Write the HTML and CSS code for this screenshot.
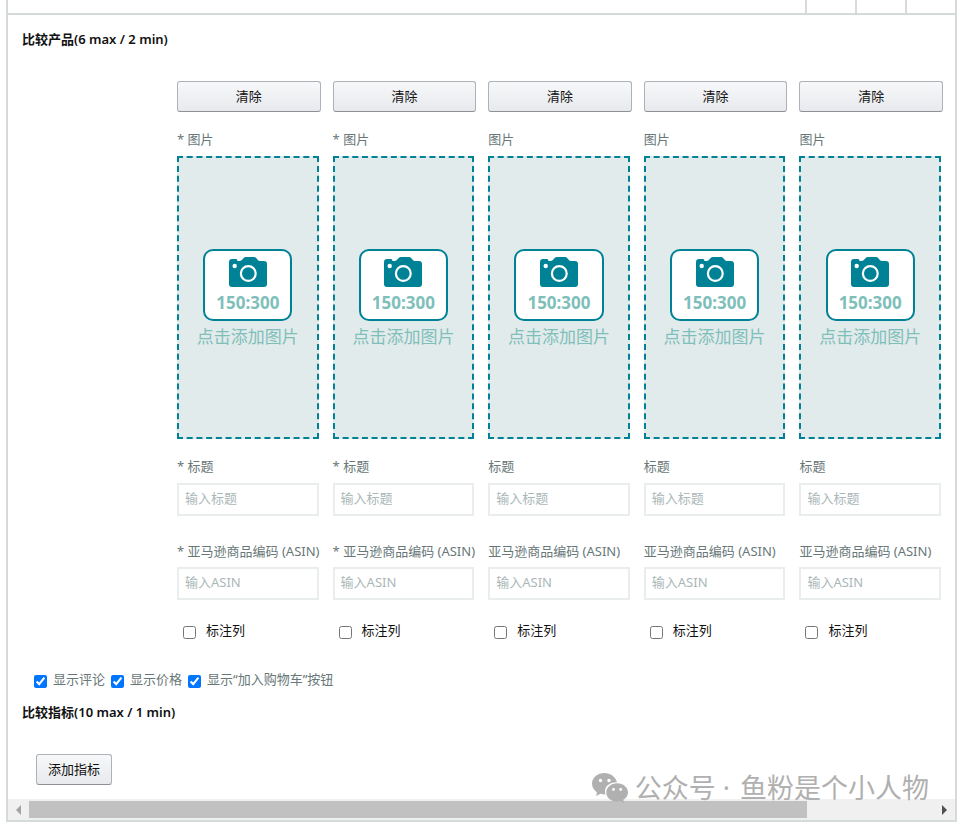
FILE: index.html
```html
<!DOCTYPE html>
<html lang="zh-CN">
<head>
<meta charset="utf-8">
<meta name="viewport" content="width=device-width, initial-scale=1">
<title>比较产品</title>
<link rel="stylesheet" href="styles.css">
</head>
<body>
<svg class="defs" aria-hidden="true">
  <symbol id="camera" viewBox="0 0 38 30">
    <path fill="#008296" d="M4 2h3q1.500 0 1.500 2h2q2 0 3-1.800Q15 0 17 0h8q2 0 3 2 1 2 3 2h4q3 0 3 3v20q0 3-3 3H3q-3 0-3-3V5q0-3 3-3z"/>
    <circle cx="5.700" cy="9" r="2.200" fill="#fff"/>
    <circle cx="19.300" cy="16.500" r="7.400" fill="none" stroke="#fff" stroke-width="2.200"/>
  </symbol>
</svg>
<main class="panel">
  <div class="panel-bar"><span></span><span></span><span></span></div>
  <div class="module">
    <h2 class="heading">比较产品(6 max / 2 min)</h2>
    <div class="products">
      <section class="product">
        <button class="btn" type="button">清除</button>
        <p class="label">* 图片</p>
        <button class="drop" type="button"><span class="card"><svg class="camera"><use href="#camera"/></svg><span class="size">150:300</span></span><span class="hint">点击添加图片</span></button>
        <label class="label" for="title1">* 标题</label>
        <input class="field" id="title1" type="text" placeholder="输入标题">
        <label class="label label-asin" for="asin1">* 亚马逊商品编码 (ASIN)</label>
        <input class="field" id="asin1" type="text" placeholder="输入ASIN">
        <label class="mark"><input class="check" type="checkbox"><span>标注列</span></label>
      </section>
      <section class="product">
        <button class="btn" type="button">清除</button>
        <p class="label">* 图片</p>
        <button class="drop" type="button"><span class="card"><svg class="camera"><use href="#camera"/></svg><span class="size">150:300</span></span><span class="hint">点击添加图片</span></button>
        <label class="label" for="title2">* 标题</label>
        <input class="field" id="title2" type="text" placeholder="输入标题">
        <label class="label label-asin" for="asin2">* 亚马逊商品编码 (ASIN)</label>
        <input class="field" id="asin2" type="text" placeholder="输入ASIN">
        <label class="mark"><input class="check" type="checkbox"><span>标注列</span></label>
      </section>
      <section class="product">
        <button class="btn" type="button">清除</button>
        <p class="label">图片</p>
        <button class="drop" type="button"><span class="card"><svg class="camera"><use href="#camera"/></svg><span class="size">150:300</span></span><span class="hint">点击添加图片</span></button>
        <label class="label" for="title3">标题</label>
        <input class="field" id="title3" type="text" placeholder="输入标题">
        <label class="label label-asin" for="asin3">亚马逊商品编码 (ASIN)</label>
        <input class="field" id="asin3" type="text" placeholder="输入ASIN">
        <label class="mark"><input class="check" type="checkbox"><span>标注列</span></label>
      </section>
      <section class="product">
        <button class="btn" type="button">清除</button>
        <p class="label">图片</p>
        <button class="drop" type="button"><span class="card"><svg class="camera"><use href="#camera"/></svg><span class="size">150:300</span></span><span class="hint">点击添加图片</span></button>
        <label class="label" for="title4">标题</label>
        <input class="field" id="title4" type="text" placeholder="输入标题">
        <label class="label label-asin" for="asin4">亚马逊商品编码 (ASIN)</label>
        <input class="field" id="asin4" type="text" placeholder="输入ASIN">
        <label class="mark"><input class="check" type="checkbox"><span>标注列</span></label>
      </section>
      <section class="product">
        <button class="btn" type="button">清除</button>
        <p class="label">图片</p>
        <button class="drop" type="button"><span class="card"><svg class="camera"><use href="#camera"/></svg><span class="size">150:300</span></span><span class="hint">点击添加图片</span></button>
        <label class="label" for="title5">标题</label>
        <input class="field" id="title5" type="text" placeholder="输入标题">
        <label class="label label-asin" for="asin5">亚马逊商品编码 (ASIN)</label>
        <input class="field" id="asin5" type="text" placeholder="输入ASIN">
        <label class="mark"><input class="check" type="checkbox"><span>标注列</span></label>
      </section>
    </div>
    <div class="options">
      <label class="option"><input class="check" type="checkbox" checked><span>显示评论</span></label>
      <label class="option"><input class="check" type="checkbox" checked><span>显示价格</span></label>
      <label class="option"><input class="check" type="checkbox" checked><span>显示“加入购物车”按钮</span></label>
    </div>
    <h2 class="heading">比较指标(10 max / 1 min)</h2>
    <button class="btn btn-add" type="button">添加指标</button>
  </div>
  <div class="scroll">
    <svg class="arrow" viewBox="0 0 5 10"><path fill="#a3a3a3" d="M5 0v10L0 5z"/></svg>
    <div class="track"><div class="thumb"></div></div>
    <svg class="arrow" viewBox="0 0 5 10"><path fill="#505050" d="M0 0v10l5-5z"/></svg>
  </div>
  <div class="watermark">
    <svg class="wechat" viewBox="0 0 36 30">
      <path fill="#b0b0b0" d="M12.500 0C5.600 0 0 4.700 0 10.800c0 3.500 1.900 6.500 4.900 8.500L4.200 23l4.200-2.200c1.700.5 3.300.7 5 .6C11.500 14 17 9.200 25 9.300 23.500 3.800 18.500 0 12.500 0z"/>
      <path fill="#b0b0b0" d="M25.200 10.200c-6 0-10.900 4-10.900 9.200s4.900 9.200 10.900 9.200c1.300 0 2.500-.2 3.600-.5l3.200 1.900-.7-3.200c2.800-1.700 4.700-4.300 4.700-7.400 0-5.200-4.900-9.200-10.800-9.200z"/>
      <g fill="#fff"><circle cx="8.500" cy="7.500" r="1.700"/><circle cx="17" cy="7.500" r="1.700"/><circle cx="21.500" cy="16.500" r="1.400"/><circle cx="28.700" cy="16.500" r="1.400"/></g>
    </svg>
    <span>公众号<span class="dot"> · </span>鱼粉是个小人物</span>
  </div>
</main>
</body>
</html>
```
FILE: styles.css
```css
* {
  box-sizing: border-box;
}

body {
  margin: 0;
  background: #fff;
  color: #111;
  font: 13px/20px "Noto Sans", "Noto Sans CJK SC", sans-serif;
}

button,
input {
  font: inherit;
}

.defs {
  display: none;
}

.panel {
  position: relative;
  margin: 0 2px 0 6px;
  border: 2px solid #d5dbdb;
  border-top: 0;
}

.panel-bar {
  display: flex;
  justify-content: flex-end;
  height: 15px;
  border-bottom: 2px solid #d5dbdb;
}

.panel-bar span {
  width: 50px;
  border-left: 2px solid #d5dbdb;
}

.module {
  padding: 14px 12px 14px 14px;
}

.heading {
  margin: 0 0 32px;
  font-size: 13px;
  font-weight: 600;
}

.products {
  display: grid;
  grid-template-columns: repeat(5, minmax(0, 1fr));
  gap: 12px;
  margin-left: 155px;
}

.product {
  display: flex;
  flex-direction: column;
}

.btn {
  height: 31px;
  padding: 0 11px 2px;
  border: 1px solid #adb1b8;
  border-bottom-color: #8d9096;
  border-radius: 3px;
  background: linear-gradient(#f7f8fa, #e7e9ec);
  color: #111;
  line-height: 20px;
}

.label {
  margin: 17px 0 7px;
  color: #687778;
  white-space: nowrap;
}

.label-asin {
  margin-top: 25px;
  margin-bottom: 6px;
}

.drop {
  display: flex;
  flex-direction: column;
  align-items: center;
  justify-content: center;
  gap: 4px;
  height: 283px;
  margin-right: 2px;
  padding: 2px 0 0;
  border: 2px dashed #008296;
  background: #e2ebeb;
  color: #7fbfba;
  font-size: 17px;
  line-height: 24px;
}

.card {
  display: flex;
  flex-direction: column;
  align-items: center;
  gap: 4px;
  padding: 6px 11px 4px;
  border: 2px solid #008296;
  border-radius: 10px;
  background: #fff;
}

.camera {
  width: 38px;
  height: 30px;
}

.size {
  font-weight: 700;
}

.field {
  width: auto;
  height: 33px;
  margin-right: 2px;
  padding: 0 6px 4px;
  border: 2px solid #eaeded;
  border-radius: 0;
  background: #fff;
  color: #111;
}

.field::placeholder {
  color: #aab7b8;
}

.check {
  width: 13px;
  height: 13px;
  margin: 5px 0 0;
}

.mark {
  display: flex;
  align-items: center;
  gap: 10px;
  margin: 20px 0 0 6px;
}

.options {
  display: flex;
  gap: 6px;
  margin: 29px 0 13px 12px;
  color: #687778;
}

.option {
  display: flex;
  align-items: center;
  gap: 6px;
}

.btn-add {
  display: block;
  margin-left: 14px;
}

.scroll {
  display: flex;
  align-items: center;
  gap: 8px;
  height: 21px;
  padding: 0 8px;
  background: #f0f0f0;
}

.arrow {
  width: 5px;
  height: 10px;
}

.track {
  flex: 1;
}

.thumb {
  width: 86%;
  height: 17px;
  background: #c1c1c1;
}

.watermark {
  position: absolute;
  right: 26px;
  bottom: 12px;
  display: flex;
  align-items: center;
  gap: 7px;
  color: #b0b0b0;
  font: 27px/40px "Noto Sans", "Noto Sans CJK SC", sans-serif;
}

.dot {
  padding-right: 3px;
}

.wechat {
  width: 36px;
  height: 30px;
}
```
